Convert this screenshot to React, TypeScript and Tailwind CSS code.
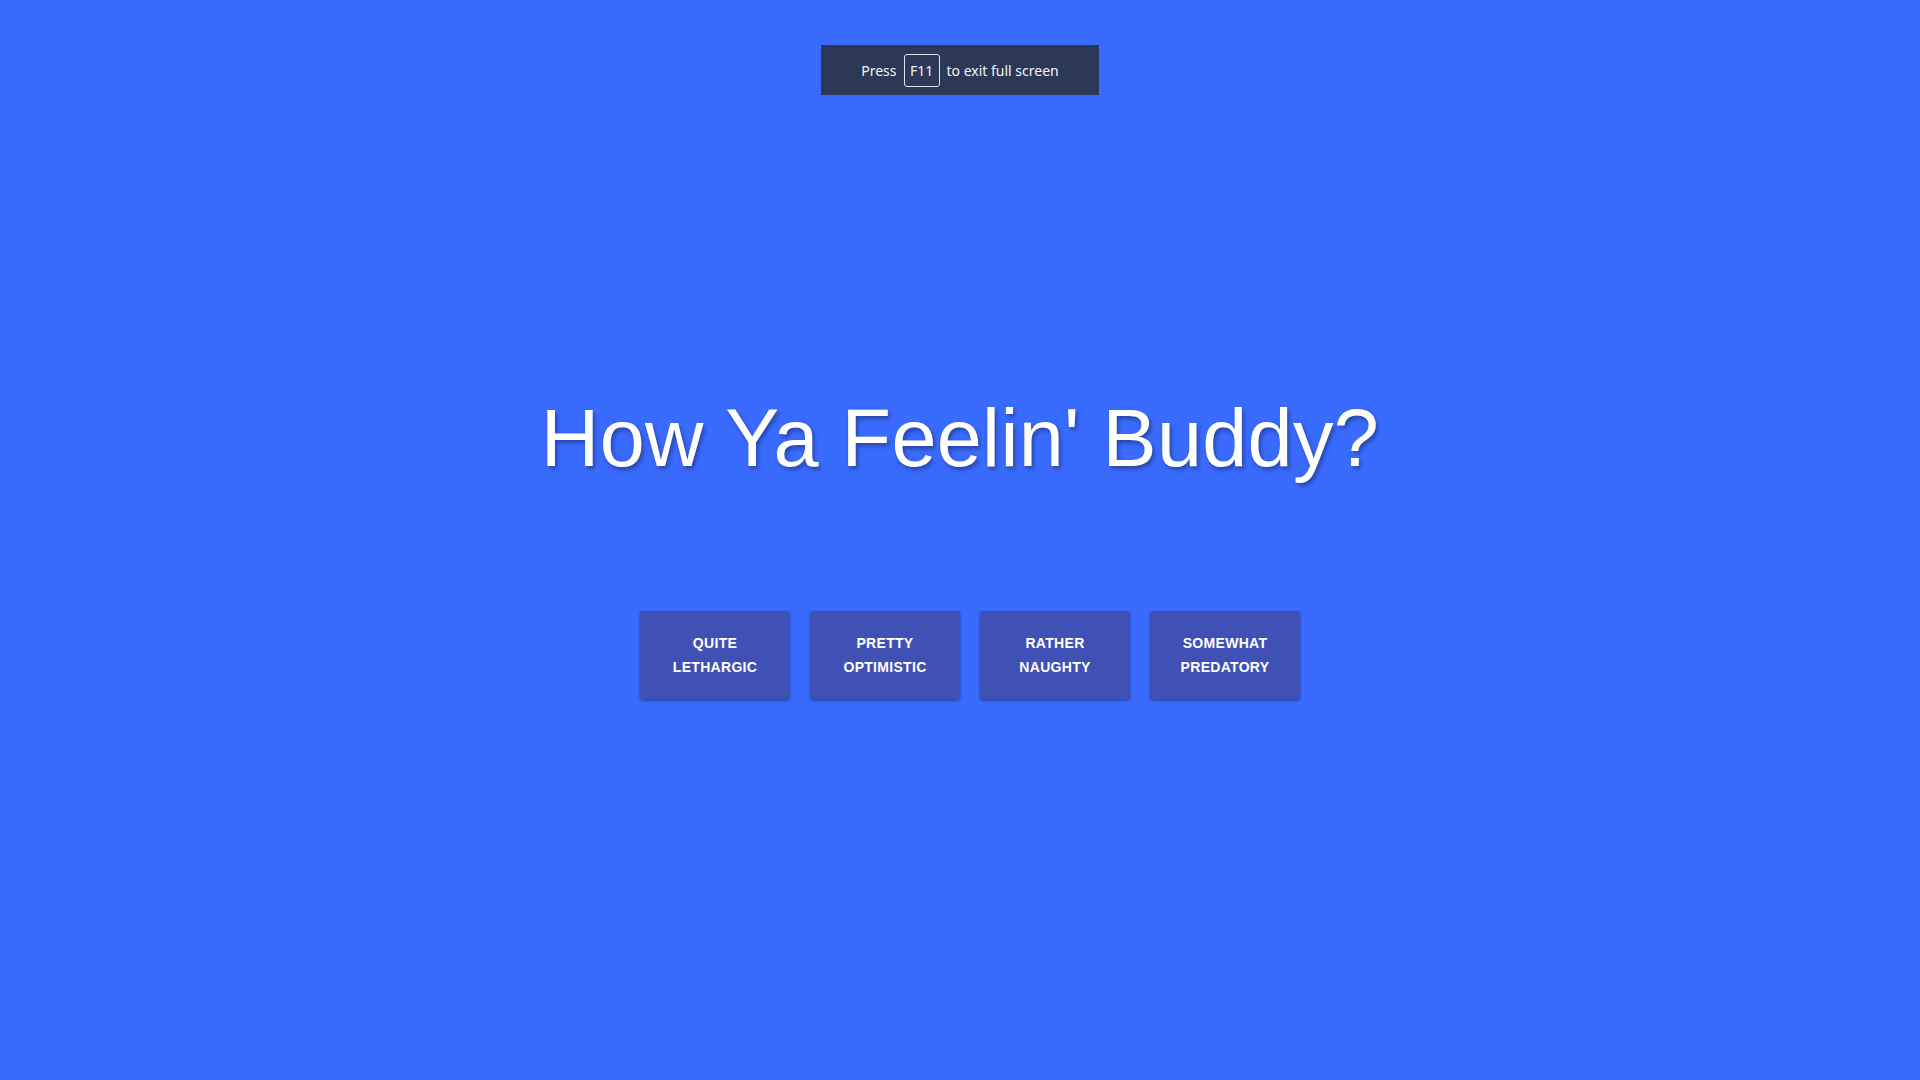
const moods = [
  ['Quite', 'Lethargic'],
  ['Pretty', 'Optimistic'],
  ['Rather', 'Naughty'],
  ['Somewhat', 'Predatory']
];

function FullscreenHint() {
  return (
    <div className="absolute left-1/2 top-[45px] flex h-[50px] w-[278px] -translate-x-1/2 items-center justify-center gap-[7px] bg-[#2c3956] font-['Noto_Sans',sans-serif] text-[14px] text-[#f3f4f7]">
      <span>Press</span>
      <span className="flex h-[33px] w-[36px] items-center justify-center rounded-[3px] border border-[#dfe2ea]">F11</span>
      <span>to exit full screen</span>
    </div>
  );
}

export default function App() {
  return (
    <div className="relative min-h-screen w-full bg-[#3a6bff] font-['Liberation_Sans',Arial,sans-serif] text-white">
      <FullscreenHint />
      <div className="flex flex-col items-center pt-[393px]">
        <h1 className="text-[81px] leading-[90px] tracking-[0.3px] [text-shadow:2px_3px_4px_rgba(0,0,0,0.35)]">
          How Ya Feelin&#39; Buddy?
        </h1>
        <div className="mt-[128px] flex gap-[20px] pl-[20px]">
          {moods.map(([a, b]) => (
            <button
              key={b}
              className="flex h-[88px] w-[150px] flex-col items-center justify-center rounded-[3px] bg-[#3f51b5] text-[14px] font-bold uppercase leading-[24px] tracking-[0.3px] text-white shadow-[0_2px_3px_rgba(0,0,0,0.3),0_0_2px_rgba(0,0,0,0.12)]"
            >
              <span>{a}</span>
              <span>{b}</span>
            </button>
          ))}
        </div>
      </div>
    </div>
  );
}
